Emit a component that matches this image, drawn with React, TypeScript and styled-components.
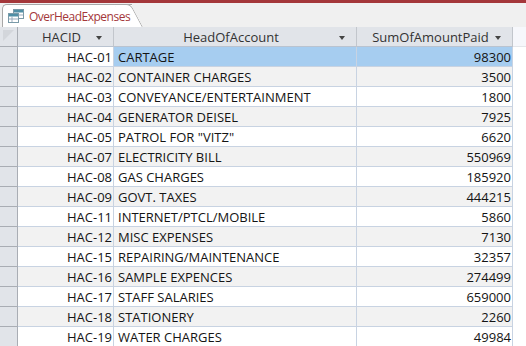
import React from "react";
import styled, { createGlobalStyle } from "styled-components";

const Global = createGlobalStyle`
  html, body { margin: 0; padding: 0; background: #f0f0f0; }
  body { font-family: "Open Sans", "Noto Sans", sans-serif; overflow: hidden; }
`;

const Frame = styled.div`
  width: 526px;
  height: 346px;
  display: flex;
  flex-direction: column;
  overflow: hidden;
`;

const TopBar = styled.div`
  height: 3px;
  background: #a4373a;
  flex: none;
`;

const TabStrip = styled.div`
  height: 24px;
  flex: none;
  display: flex;
  align-items: flex-end;
  padding-left: 2px;
  background: #f0f0f0;
`;

const Tab = styled.div`
  position: relative;
  height: 23px;
  width: 130px;
  flex: none;
  background: #ffffff;
  border-top: 1px solid #a8a8a8;
  border-left: 1px solid #a8a8a8;
  border-top-left-radius: 5px;
  display: flex;
  align-items: center;
  gap: 5px;
  padding-left: 5px;
  box-sizing: border-box;
  &::after {
    content: "";
    position: absolute;
    top: -1px;
    right: -12px;
    width: 16px;
    height: 24px;
    background: #ffffff;
    border-top: 1px solid #a8a8a8;
    border-right: 1px solid #a8a8a8;
    border-top-right-radius: 5px;
    transform: skewX(28deg);
    transform-origin: bottom left;
  }
`;

const TabIconBox = styled.span`
  flex: none;
  display: flex;
  position: relative;
  z-index: 1;
`;

const TabLabel = styled.span`
  position: relative;
  z-index: 1;
  flex: none;
  color: #a4373a;
  font-size: 12px;
  font-weight: 500;
  white-space: nowrap;
  letter-spacing: -0.5px;
`;

const Grid = styled.div`
  display: grid;
  grid-template-columns: 18px 96px 243px 156px 1fr;
  grid-auto-rows: 20px;
  flex: 1;
  background: #fff;
  font-size: 13px;
  color: #141414;
`;

const Corner = styled.div`
  background: #e1e4e9;
  border-right: 1px solid #a9adb4;
  border-bottom: 1px solid #a9adb4;
  box-sizing: border-box;
  position: relative;
  overflow: hidden;
  &::before {
    content: "";
    position: absolute;
    left: 3px;
    top: 3px;
    border-top: 11px solid #d3d6db;
    border-right: 11px solid transparent;
  }
`;

const HeadCell = styled.div`
  background: #e1e4e9;
  border-right: 1px solid #c2c6cc;
  border-bottom: 1px solid #b9c3d0;
  box-sizing: border-box;
  display: flex;
  align-items: center;
  justify-content: center;
  position: relative;
  padding-right: 8px;
  color: #333;
`;

const HeadFill = styled.div`
  background: #f6f7fb;
  border-bottom: 1px solid #e4e6ea;
`;

const Arrow = styled.span`
  position: absolute;
  right: 11px;
  top: 9px;
  width: 0;
  height: 0;
  border-left: 3.5px solid transparent;
  border-right: 3.5px solid transparent;
  border-top: 4px solid #444;
`;

const Selector = styled.div`
  background: #e1e4e9;
  border-right: 1px solid #a9adb4;
  border-bottom: 1px solid #a9adb4;
  box-sizing: border-box;
`;

const Cell = styled.div<{ $alt: boolean; $sel?: boolean; $num?: boolean }>`
  background: ${(p) => (p.$sel ? "#a6cdf0" : p.$alt ? "#f2f2f2" : "#ffffff")};
  border-right: 1px solid #c8d3e2;
  border-bottom: 1px solid #c8d3e2;
  box-sizing: border-box;
  display: flex;
  align-items: center;
  justify-content: ${(p) => (p.$num ? "flex-end" : "flex-start")};
  padding: ${(p) => (p.$num ? "0 1px 0 0" : "0 0 0 4px")};
  white-space: nowrap;
  overflow: hidden;
`;

const Fill = styled.div`
  background: #fff;
`;

const TableIcon = () => (
  <svg width="16" height="15" viewBox="0 0 16 15">
    <rect x="5.5" y="0.5" width="10" height="9" fill="#fff" stroke="#7a9aa8" />
    <rect x="6" y="1" width="9" height="2.5" fill="#4f8fa6" />
    <line x1="9" y1="3.5" x2="9" y2="9" stroke="#9ab" />
    <line x1="6" y1="6" x2="15" y2="6" stroke="#9ab" />
    <rect x="0.5" y="4.5" width="10" height="9" fill="#fff" stroke="#7a9aa8" />
    <rect x="1" y="5" width="9" height="2.5" fill="#4f8fa6" />
    <line x1="4" y1="7.5" x2="4" y2="13" stroke="#9ab" />
    <line x1="1" y1="10" x2="10" y2="10" stroke="#9ab" />
  </svg>
);

const rows: [string, string, number][] = [
  ["HAC-01", "CARTAGE", 98300],
  ["HAC-02", "CONTAINER CHARGES", 3500],
  ["HAC-03", "CONVEYANCE/ENTERTAINMENT", 1800],
  ["HAC-04", "GENERATOR DEISEL", 7925],
  ["HAC-05", 'PATROL FOR "VITZ"', 6620],
  ["HAC-07", "ELECTRICITY BILL", 550969],
  ["HAC-08", "GAS CHARGES", 185920],
  ["HAC-09", "GOVT. TAXES", 444215],
  ["HAC-11", "INTERNET/PTCL/MOBILE", 5860],
  ["HAC-12", "MISC EXPENSES", 7130],
  ["HAC-15", "REPAIRING/MAINTENANCE", 32357],
  ["HAC-16", "SAMPLE EXPENCES", 274499],
  ["HAC-17", "STAFF SALARIES", 659000],
  ["HAC-18", "STATIONERY", 2260],
  ["HAC-19", "WATER CHARGES", 49984],
];

export default function App() {
  return (
    <Frame>
      <Global />
      <TopBar />
      <TabStrip>
        <Tab>
          <TabIconBox>
            <TableIcon />
          </TabIconBox>
          <TabLabel>OverHeadExpenses</TabLabel>
        </Tab>
      </TabStrip>
      <Grid>
        <Corner />
        <HeadCell>
          HACID
          <Arrow />
        </HeadCell>
        <HeadCell>
          HeadOfAccount
          <Arrow />
        </HeadCell>
        <HeadCell>
          SumOfAmountPaid
          <Arrow />
        </HeadCell>
        <HeadFill />
        {rows.map(([id, name, amt], i) => (
          <React.Fragment key={id}>
            <Selector />
            <Cell $alt={i % 2 === 1} $num>
              {id}
            </Cell>
            <Cell $alt={i % 2 === 1} $sel={i === 0}>
              {name}
            </Cell>
            <Cell $alt={i % 2 === 1} $sel={i === 0} $num>
              {amt}
            </Cell>
            <Fill />
          </React.Fragment>
        ))}
      </Grid>
    </Frame>
  );
}
